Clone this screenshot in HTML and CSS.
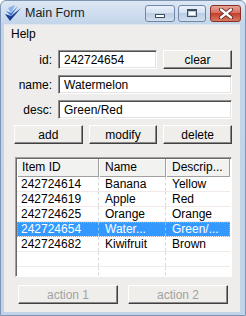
FILE: index.html
```html
<!DOCTYPE html>
<html lang="en">
    <head>
        <meta charset="UTF-8">
        <meta name="viewport" content="width=device-width, initial-scale=1.0">
        <title>Main Form</title>

        <link rel="stylesheet" href="styles.css">
    </head>
    <body>
        <div class="window">
            <div class="titlebar">
                <svg class="app-icon" width="16" height="16" viewBox="0 0 16 16">
                    <path d="M0 9 L5 16 L16 3 L6 11 Z" fill="#1d3f92"/>
                    <path d="M1 6 L6 11 L13 1 L6 8 Z" fill="#3f78cf"/>
                    <path d="M3 3 L6 8 L10 0 Z" fill="#86b0ea"/>
                </svg>
                <span class="title">Main Form</span>
                <div class="caption">
                    <span class="cap min"><i></i></span>
                    <span class="cap max"><i></i></span>
                    <span class="cap close">
                        <svg width="16" height="11" viewBox="0 0 16 11">
                            <path d="M3 1.5 L13 9.5 M13 1.5 L3 9.5" stroke="#5a1a14" stroke-width="4" stroke-linecap="round"/>
                            <path d="M3 1.5 L13 9.5 M13 1.5 L3 9.5" stroke="#fff" stroke-width="2.4" stroke-linecap="round"/>
                        </svg>
                    </span>
                </div>
            </div>

            <div class="client">
                <div class="menubar"><span>Help</span></div>

                <div class="fields">
                    <label for="id">id:</label>
                    <input id="id" class="box" value="242724654">
                    <button class="btn">clear</button>

                    <label for="name">name:</label>
                    <input id="name" class="box wide" value="Watermelon">

                    <label for="desc">desc:</label>
                    <input id="desc" class="box wide" value="Green/Red">
                </div>

                <div class="actions">
                    <button class="btn">add</button>
                    <button class="btn">modify</button>
                    <button class="btn">delete</button>
                </div>

                <div class="list">
                    <div class="row head">
                        <span>Item ID</span><span>Name</span><span>Descrip...</span>
                    </div>
                    <div class="row"><span>242724614</span><span>Banana</span><span>Yellow</span></div>
                    <div class="row"><span>242724619</span><span>Apple</span><span>Red</span></div>
                    <div class="row"><span>242724625</span><span>Orange</span><span>Orange</span></div>
                    <div class="row selected"><span>242724654</span><span>Water...</span><span>Green/...</span></div>
                    <div class="row"><span>242724682</span><span>Kiwifruit</span><span>Brown</span></div>
                    <div class="row"><span></span><span></span><span></span></div>
                    <div class="row"><span></span><span></span><span></span></div>
                </div>

                <div class="bottom">
                    <button class="btn" disabled>action 1</button>
                    <button class="btn" disabled>action 2</button>
                </div>
            </div>
        </div>
    </body>
</html>
```

FILE: styles.css
```css
* {
    box-sizing: border-box;
    font-family: "Liberation Sans", Arial, sans-serif;
    font-size: 12px;
}

body {
    margin: 0;
    background: #fff;
    color: #000;
}

.window {
    width: 246px;
    height: 316px;
    display: flex;
    flex-direction: column;
    padding: 0 5px 3px 3px;
    border: 1px solid #7e95b3;
    border-radius: 6px 6px 0 0;
    background: linear-gradient(#dde7f4, #c3d5ea 23px, #c1d3e9);
}

/* title bar */
.titlebar {
    height: 23px;
    display: flex;
    align-items: center;
}
.app-icon {
    margin: 1px 4px 0 1px;
}
.title {
    flex: 1;
    color: #1b1b1b;
    font-size: 12.5px;
}
.caption {
    display: flex;
    gap: 3px;
    margin-right: -1px;
    margin-top: 1px;
}
.cap {
    height: 17px;
    display: flex;
    align-items: center;
    justify-content: center;
    border: 1px solid #6f86a6;
    border-radius: 3px;
    background: linear-gradient(#eaf1f9, #d3e0ef 50%, #bccee4 50%, #d2deec);
}
.cap.min { width: 30px; }
.cap.max { width: 28px; margin-right: 1px; }
.cap.close {
    width: 31px;
    border-color: #8a2f25;
    background: linear-gradient(#e7a597, #d26a58 50%, #c2402c 50%, #d87a62);
}
.cap.min i {
    width: 10px;
    height: 4px;
    margin-top: 6px;
    background: #fff;
    border: 1px solid #3b4c63;
}
.cap.max i {
    width: 10px;
    height: 8px;
    background: #fff;
    border: 1px solid #3b4c63;
    border-top-width: 2px;
    box-shadow: inset 0 0 0 1px #bcd;
}

/* client area */
.client {
    flex: 1;
    background: #eeedeb;
    border-top: 1px solid #dfe6ef;
}
.menubar {
    height: 18px;
    line-height: 18px;
    padding-left: 7px;
}

.fields {
    display: grid;
    grid-template-columns: 38px 99px 69px;
    grid-auto-rows: 19px;
    column-gap: 6px;
    row-gap: 6px;
    align-items: center;
    padding: 7px 8px 0 10px;
}
.fields label {
    text-align: right;
}
.box {
    height: 19px;
    padding: 0 0 0 5px;
    border: 1px solid;
    border-color: #8f8f8f #fff #fff #8f8f8f;
    box-shadow: inset 1px 1px 0 #4f4f4f, inset -1px -1px 0 #e3e3e3;
    background: #fff;
    outline: none;
}
.box.wide {
    grid-column: 2 / 4;
}

.btn {
    height: 19px;
    padding: 0;
    border: 1px solid;
    border-color: #fff #404040 #404040 #fff;
    box-shadow: inset -1px -1px 0 #8a8a8a;
    background: #efeeeb;
    color: #000;
}
.btn:disabled {
    color: #a2a2a2;
}

.actions {
    display: grid;
    grid-template-columns: repeat(3, 1fr);
    gap: 6px;
    margin: 6px 8px 0 10px;
}

/* list view */
.list {
    height: 120px;
    margin: 13px 8px 0 11px;
    overflow: hidden;
    border: 1px solid;
    border-color: #a0a0a0 #fff #fff #a0a0a0;
    box-shadow: inset 1px 1px 0 #696969;
    background: #fff;
    padding: 1px 1px 0 1px;
}
.row {
    display: grid;
    grid-template-columns: 82px 67px 64px;
    height: 15px;
    line-height: 14px;
    border-bottom: 1px solid #f1e8e8;
}
.row span {
    padding-left: 6px;
    white-space: nowrap;
    overflow: hidden;
    border-right: 1px dashed #d9d9d9;
}
.row span:first-child {
    padding-left: 4px;
}
.row span:last-child {
    border-right: none;
}
.row.head {
    height: 18px;
    line-height: 17px;
    border-bottom: none;
}
.row.head span {
    background: #f2f2f1;
    border-right: 1px solid #a0a0a0;
    box-shadow: inset 1px 1px 0 #fff, inset 0 -1px 0 #a0a0a0;
}
.row.head span:first-child {
    padding-left: 5px;
}
.row.selected {
    background: #3399ff;
    color: #fff;
    outline: 1px dotted #f0a050;
    outline-offset: -1px;
}
.row.selected span {
    border-right-color: #8cc4ff;
}

.bottom {
    display: grid;
    grid-template-columns: 1fr 1fr;
    gap: 10px;
    margin: 8px 12px 0 14px;
}
```
